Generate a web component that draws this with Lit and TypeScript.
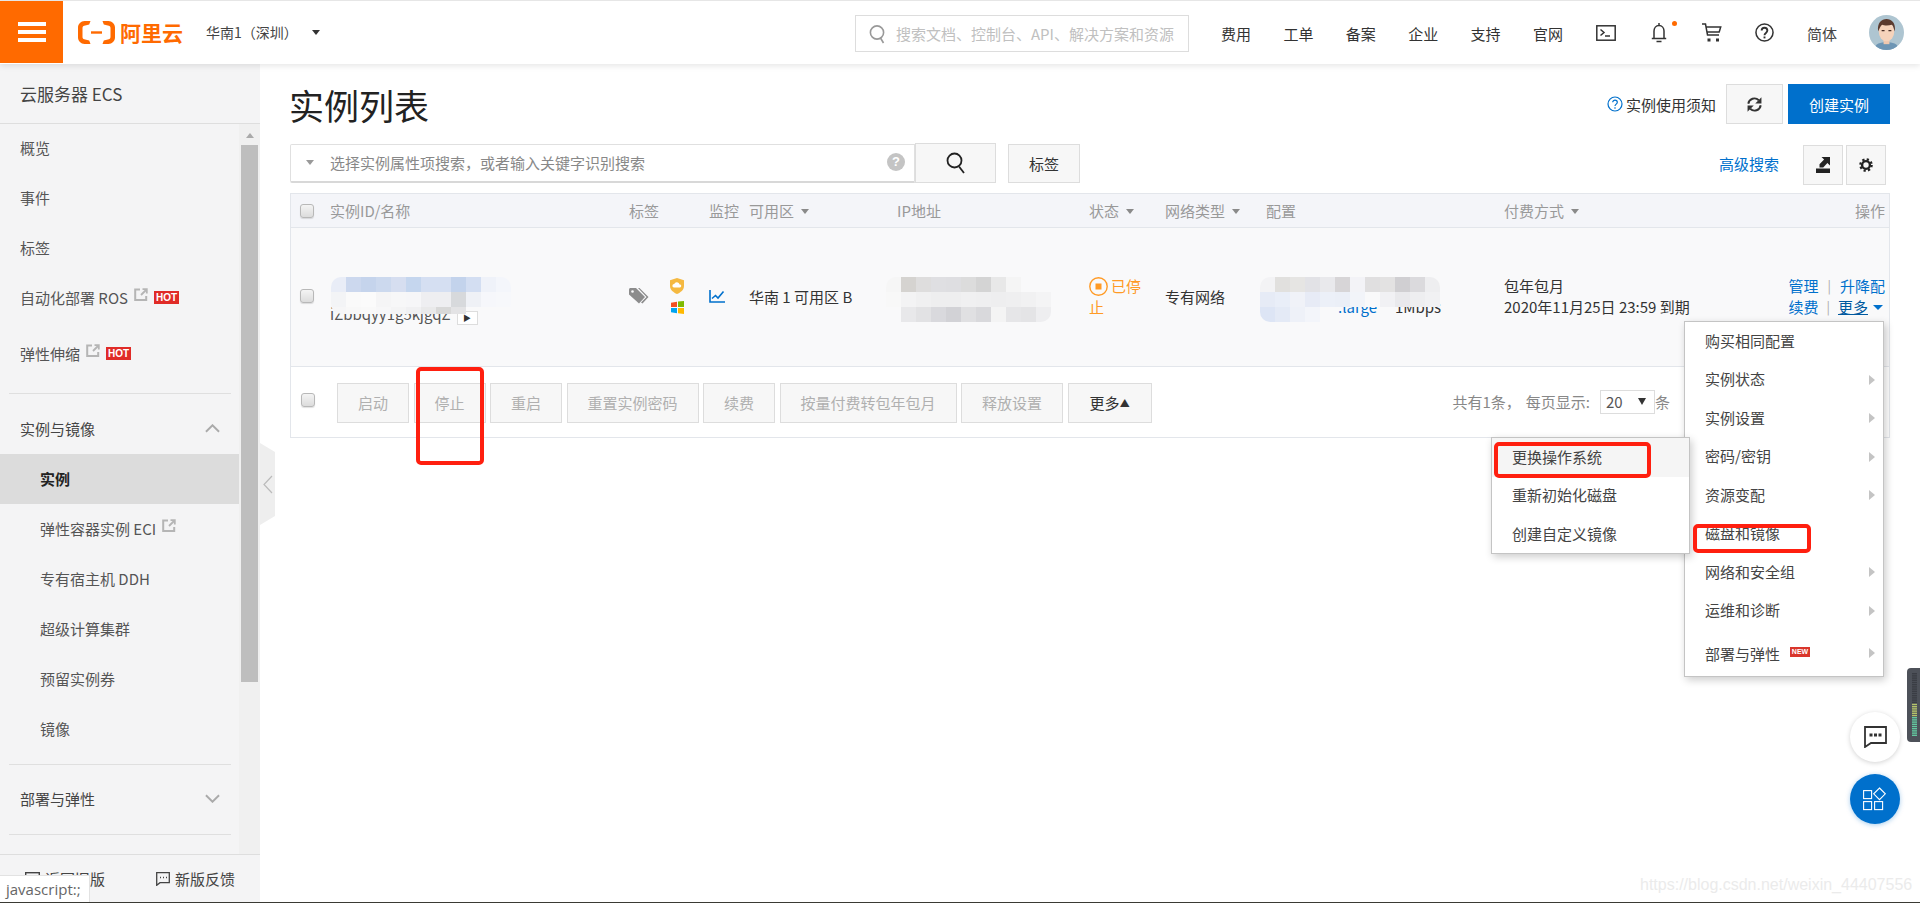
import { LitElement, html, css, svg } from "lit";
import { customElement } from "lit/decorators.js";

const extIcon = html`<svg class="ext" viewBox="0 0 14 13" width="14" height="13" fill="none" stroke="#b5b5b5" stroke-width="2"><path d="M6 1.500H1.200v10.500h11V8"/><path d="M7 7l5-5M8.500 1.200h4.300v4.300" stroke-width="1.800"/></svg>`;

const idBlob = [
  ["#e9edf7","#ccd8ee","#c5d4ec","#ccd9ee","#d6def0","#c5d6ee","#d5dff2","#d5dff2","#c3d3ec","#d3def2","#eff2f9","#f4f6fb"],
  ["#f3f4f6","#fafafa","#fbfbfb","#f5f5f6","#f7f7f8","#f6f6f8","#eeeef1","#eeeef1","#d7d9dc","#eff1f6","#f6f7fb","#f7f8fb"],
  ["#f6f6f7","#f8f8f8","#f9f9f9","#f7f7f8","#f4f4f5","#f0f0f2","#e9e9ea","#d8d8d8","#e3e3e5","transparent","transparent","transparent"],
];
const ipBlob = [
  ["#f6f6f6","#d5d3d0","#dedddd","#dfdfe2","#dedee1","#dcdcdc","#d4d4d4","#e8e8e8","#f5f5f5","#f9f9fa","transparent"],
  ["#f8f8f8","#f3f3f4","#f0f0f1","#eeeeef","#eeeeef","#f0f0f1","#efeff0","#eeeeef","#efeff0","#f1f1f2","#f4f4f5"],
  ["transparent","#e8e8ea","#e2e2e4","#d9d9dd","#d2d2d6","#e0e0e2","#d9d9dc","#f4f4f4","#e6e6e8","#e4e4e6","#eeeef0"],
];
const cfgBlob = [
  ["#f3f3f5","#e1e0de","#e6e5e3","#e2e2e6","#e9e9ec","#d7d5d7","#f3f3f7","#e0dfe0","#e3e2e2","#d0cfd2","#dbdadd","#eeeef0"],
  ["#e6ebf6","#e9eef8","#f0f2f8","#e7ebf6","#ecf0f8","#ebeff7","#f2f4f9","#f9f9fa","#f1f1f4","#e9e9ec","#eeeef0","#f1f1f3"],
  ["#dde5f5","#e4eaf6","#eef1f8","#f3f5fa","transparent","transparent","transparent","transparent","transparent","transparent","transparent","transparent"],
];

const mosaic = (cls: string, rows: string[][]) => html`<div class="blob ${cls}" style="grid-template-columns:repeat(${rows[0].length},15px)">
  ${rows.flat().map((c) => html`<i style="background:${c}"></i>`)}
</div>`;

@customElement("app-root")
export class AppRoot extends LitElement {
  static styles = css`
    :host { display: block; width: 1920px; height: 903px; position: relative; overflow: hidden; background: #fff;
      font-family: "Noto Sans CJK SC", "Liberation Sans", sans-serif; font-size: 15px; color: #333; line-height: 21px; }
    * { box-sizing: border-box; }
    .page { display: flex; flex-direction: column; height: 903px; }
    .top { height: 64px; flex: none; display: flex; align-items: center; background: #fff; border-top: 1px solid #e6e6e6;
      box-shadow: 0 2px 6px rgba(0,0,0,.1); position: relative; z-index: 3; }
    .burger { width: 63px; height: 62px; margin-bottom: 1px; background: #ff6a00; display: flex; flex-direction: column; justify-content: center; align-items: center; gap: 4px; }
    .burger i { display: block; width: 28px; height: 4px; background: #fff; }
    .logo { display: flex; align-items: center; margin-left: 15px; gap: 5px; color: #ff6a00; font-weight: 700; font-size: 21px; letter-spacing: 0; width: 105px; margin-bottom: 1px; white-space: nowrap; }
    .region { margin-left: 23px; width: 106px; color: #444; font-size: 14px; white-space: nowrap; }
    .drop { width: 0; height: 0; border: 4.5px solid transparent; border-top: 5px solid #333; border-bottom: 0; }
    .topsearch { margin-left: 535px; width: 334px; height: 37px; border: 1px solid #ddd; display: flex; align-items: center; padding-left: 13px; gap: 10px; color: #c0c0c0; white-space: nowrap; margin-top: 2px; }
    .nav { display: flex; margin-left: 32px; width: 375px; gap: 32.4px; white-space: nowrap; color: #333; margin-top: 2px; }
    .nav span { width: 30px; }
    .ico { display: block; flex: none; }
    .t2 { margin-left: 35px; } .t3 { margin-left: 35px; } .t4 { margin-left: 33px; }
    .bell { position: relative; }
    .bell b { position: absolute; left: 21px; top: -2px; width: 5px; height: 5px; border-radius: 50%; background: #ff6a00; }
    .lang { margin-left: 33px; margin-top: 2px; white-space: nowrap; color: #444; }
    .avatar { margin-left: 32px; }

    .body { flex: 1; display: flex; min-height: 0; }
    .side { width: 260px; flex: none; background: #f0f0f0; display: flex; flex-direction: column; }
    .side-title { height: 60px; flex: none; background: #f4f4f5; border-bottom: 1px solid #dedede; padding: 19px 0 0 20px; font-size: 17px; line-height: 22px; color: #444; }
    .side-mid { flex: 1; display: flex; min-height: 0; overflow: hidden; }
    .list { width: 239px; flex: none; background: #f4f4f5; padding-top: 0; }
    .bar { width: 17px; margin-left: 2px; display: flex; flex-direction: column; align-items: center; }
    .bar u { display: block; width: 0; height: 0; margin: 9px 0 7px; border: 4px solid transparent; border-bottom: 5px solid #aaa; border-top: 0; }
    .bar b { display: block; width: 17px; height: 537px; background: #bebebe; }
    .item { height: 50px; display: flex; align-items: center; padding: 0 0 2px 20px; color: #555; white-space: nowrap; }
    .list > .item:first-child { margin-top: -1px; }
    .item.sub { padding-left: 40px; }
    .item.gap { margin-top: 6px; }
    .item.on { background: #dcdcdc; color: #222; font-weight: 700; }
    .item.group { color: #444; justify-content: space-between; padding-right: 19px; }
    .ext { margin-left: 6px; margin-top: -6px; flex: none; }
    .hot { margin-left: 6px; width: 25px; height: 13px; background: #e02b27; color: #fff; font: 700 10px/13px "Liberation Sans", sans-serif; text-align: center; flex: none; }
    .div { height: 1px; background: #dfdfdf; margin: 14px 8px 10px 9px; }
    .div.b { margin: 10px 8px 9px 9px; }
    .div.c { margin: 10px 8px 0 9px; }
    .side-foot { height: 48px; flex: none; background: #f4f4f5; border-top: 1px solid #dedede; display: flex; align-items: center; padding-left: 25px; color: #444; white-space: nowrap; }
    .side-foot svg { margin-right: 5px; }
    .side-foot .fb { margin-left: 51px; }

    .main { flex: 1; padding: 20px 30px 0; min-width: 0; }
    .head { display: flex; align-items: center; height: 40px; }
    h1 { margin: 1px 0 0 -1px; font-size: 35px; font-weight: 400; line-height: 44px; color: #222; }
    .notice { margin-left: auto; display: flex; align-items: center; gap: 3px; white-space: nowrap; margin-right: 10px; color: #333; }
    .btn { height: 40px; border: 1px solid #ddd; background: #f7f7f7; display: flex; align-items: center; justify-content: center; white-space: nowrap; flex: none; }
    .refresh { width: 57px; }
    .create { width: 102px; margin-left: 5px; background: #0070cc; border: 0; color: #fff; }
    .filters { display: flex; margin-top: 20px; height: 41px; }
    .input { width: 625px; height: 39px; border: 1px solid #e0e0e0; border-bottom: 2px solid #d8d8d8; border-radius: 2px 0 0 2px; background: #fff; display: flex; align-items: center; padding: 0 0 2px 15px; color: #888; white-space: nowrap; }
    .input .c { width: 0; height: 0; border: 4.5px solid transparent; border-top: 5px solid #999; border-bottom: 0; margin-right: 16px; }
    .input .q { margin-left: auto; margin-right: 9px; width: 18px; height: 18px; border-radius: 50%; background: #c4c4c4; color: #fff; font: 700 13px/18px "Liberation Sans", sans-serif; text-align: center; }
    .sbtn { width: 81px; margin-top: -1px; }
    .tbtn { width: 72px; height: 39px; margin-left: 12px; }
    .adv { margin-left: auto; color: #0070cc; margin-right: 24px; align-self: center; white-space: nowrap; margin-bottom: 2px; }
    .sq { width: 40px; margin-top: 1px; }
    .sq + .sq { margin-left: 3px; margin-right: 4px; }

    .table { margin-top: 8px; border: 1px solid #e3e6eb; width: 1600px; }
    .grid { display: grid; grid-template-columns: 30px 299px 80px 40px 148px 192px 76px 101px 238px 238px 1fr; padding: 0 4px 0 9px; align-items: center; white-space: nowrap; }
    .thead { height: 34px; background: #f4f5f9; border-bottom: 1px solid #e3e6eb; color: #999; }
    .thead .r, .acts { justify-self: end; }
    .thead > div { display: flex; align-items: center; gap: 7px; }
    .cb { display: block; width: 14px; height: 14px; border: 1px solid #b8b8b8; border-radius: 3px; background: linear-gradient(#f4f4f4, #dcdcdc); box-shadow: 0 1px 1px rgba(0,0,0,.12); }
    .car { display: inline-block; width: 0; height: 0; border: 4.5px solid transparent; border-top: 5px solid #8a8a8a; border-bottom: 0; margin-top: 1px; }
    .row { height: 139px; padding-bottom: 2px; background: #f9f9fa; border-bottom: 1px solid #e3e6eb; position: relative; color: #333; }
    .blob { position: absolute; top: 49px; display: grid; grid-auto-rows: 15px; border-radius: 10px; overflow: hidden; }
    .blob i { display: block; }
    .blob.a { left: 40px; height: 37px; }
    .blob.b { left: 595px; }
    .blob.c { left: 969px; }
    .idc { padding-top: 35px; color: #555; }
    .copy { display: inline-block; width: 21px; height: 14px; margin-left: 6px; vertical-align: -1px; border: 1px solid #ddd; background: #fff; font-size: 8px; line-height: 12px; text-align: center; color: #333; }
    .marks { display: flex; align-items: center; gap: 21px; }
    .marks div { display: flex; flex-direction: column; gap: 7px; align-items: center; }
    .status { width: 56px; white-space: normal; color: #ff9a24; }
    .status svg { vertical-align: -4px; margin-right: 3px; }
    .cfg { color: #333; padding-top: 21px; padding-left: 72px; display: flex; }
    .cfg a { color: #0070cc; display: block; width: 57px; }
    .acts { color: #0070cc; }
    .acts div { display: flex; justify-content: flex-end; align-items: center; gap: 9px; }
    .acts s { text-decoration: none; color: #aaa; font-size: 13px; }
    .acts u { color: #00599f; }
    .acts .l2 { gap: 8px; margin-right: 2px; }
    .acts .car { border-top-color: #0070cc; border-width: 5px; border-bottom: 0; margin-left: -3px; }
    .tools { height: 70px; display: flex; align-items: center; padding-left: 10px; background: #fff; position: relative; }
    .tools .cb { margin-right: 22px; margin-bottom: 5px; }
    .btns { display: flex; gap: 4.5px; margin-top: 1px; }
    .btns .btn { padding: 0 20px; color: #b0b0b0; }
    .btns .more { color: #333; padding: 0 21px; font-size: 15px; }
    .more em { font-style: normal; font-size: 10px; }
    .pager { margin-left: auto; margin-right: 219px; display: flex; align-items: center; color: #888; white-space: nowrap; margin-bottom: 1px; }
    .pager span.gap { margin-left: 5px; }
    .sel { width: 55px; height: 24px; border: 1px solid #ddd; margin-left: 10px; display: flex; align-items: center; padding: 0 8px 0 5px; justify-content: space-between; color: #555; }
    .sel i { width: 0; height: 0; border: 4px solid transparent; border-top: 7px solid #333; border-bottom: 0; }

    .foot-line { height: 1px; flex: none; background: #3a3a34; }

    .menu { position: absolute; background: #fff; border: 1px solid #c4c4c4; box-shadow: 2px 3px 8px rgba(0,0,0,.2); z-index: 4; color: #444; white-space: nowrap; }
    .m1 { left: 1684px; top: 321px; width: 200px; height: 356px; }
    .m2 { left: 1491px; top: 437px; width: 199px; height: 117px; z-index: 5; }
    .mi { height: 38.5px; padding: 0 0 2px 20px; display: flex; align-items: center; position: relative; }
    .mi.hl { background: #f5f5f5; }
    .mi .ar { position: absolute; left: 184px; top: 14px; width: 0; height: 0; border: 5.5px solid transparent; border-left: 6px solid #c4c4c4; border-right: 0; }
    .mi.last { margin-top: 4px; height: 39px; padding-bottom: 0; }
    .new { margin-left: 10px; width: 20px; height: 10px; background: #d9362c; color: #fff; font: 700 7px/10px "Liberation Sans", sans-serif; text-align: center; margin-top: -4px; }
    .rb { position: absolute; border: 4px solid #ff1f0f; border-radius: 5px; z-index: 6; }
    .rb1 { left: 416px; top: 367px; width: 68px; height: 98px; }
    .rb2 { left: 1494px; top: 442px; width: 157px; height: 36px; }
    .rb3 { left: 1693px; top: 524px; width: 118px; height: 29px; }
    .collapse { position: absolute; left: 260px; top: 443px; width: 15px; height: 82px; background: #eee; clip-path: polygon(0 0, 100% 11%, 100% 89%, 0 100%); z-index: 2; display: flex; align-items: center; justify-content: center; }
    .fab { position: absolute; left: 1850px; width: 50px; height: 50px; border-radius: 50%; display: flex; align-items: center; justify-content: center; z-index: 4; }
    .fab.w { top: 712px; background: #fff; box-shadow: 0 1px 5px rgba(0,0,0,.18); }
    .fab.bl { top: 774px; background: #0070cc; box-shadow: 0 1px 5px rgba(0,112,204,.35); }
    .meter { position: absolute; left: 1907px; top: 668px; width: 13px; height: 74px; background: #4d5159; border-radius: 4px 0 0 4px; z-index: 4; }
    .tip { position: absolute; left: 0; top: 875px; width: 90px; height: 27px; background: #fff; border-top: 1px solid #e2e2e2; border-right: 1px solid #e2e2e2; color: #666; font: 15px/26px "Open Sans", sans-serif; padding-left: 6px; z-index: 6; white-space: nowrap; }
    .mark { position: absolute; left: 1640px; top: 874px; font: 16px/22px "Liberation Sans", sans-serif; color: #ebebeb; white-space: nowrap; z-index: 6; }
  `;

  render() {
    const meter = Array.from({ length: 29 }, (_, i) => {
      const fill = i < 14 ? "#3a3d44" : i < 20 ? "#b5c46a" : "#63c9a0";
      return svg`<rect x="5" y="${5 + i * 2.2}" width="5" height="1.4" fill="${fill}"/>`;
    });
    return html`
      <div class="page">
        <header class="top">
          <div class="burger"><i></i><i></i><i></i></div>
          <div class="logo">
            <svg class="ico" viewBox="0 0 37 23" width="37" height="23" fill="#ff6a00"><path d="M12.500 0H6.500C3 0 0 3 0 6.500v10C0 20 3 23 6.500 23h6l-1.300-3.600-5-1.200c-1-.3-1.700-1.100-1.700-2.200V7c0-1.100.7-1.900 1.700-2.200l5-1.200z"/><path d="M24.500 0h6C34 0 37 3 37 6.500v10c0 3.500-3 6.500-6.500 6.500h-6l1.300-3.600 5-1.200c1-.3 1.700-1.100 1.700-2.200V7c0-1.100-.7-1.900-1.700-2.200l-5-1.200z"/><rect x="13" y="10.300" width="11" height="2.400"/></svg>
            <span>阿里云</span>
          </div>
          <div class="region">华南1（深圳）</div>
          <div class="drop"></div>
          <div class="topsearch">
            <svg class="ico" viewBox="0 0 17 20" width="17" height="20" fill="none" stroke="#999" stroke-width="1.600"><circle cx="8" cy="8.500" r="6.600"/><path d="M11.500 14l3 5"/></svg>
            <span>搜索文档、控制台、API、解决方案和资源</span>
          </div>
          <div class="nav"><span>费用</span><span>工单</span><span>备案</span><span>企业</span><span>支持</span><span>官网</span></div>
          <svg class="ico" viewBox="0 0 20 16" width="20" height="16" fill="none" stroke="#333" stroke-width="1.500"><rect x=".8" y=".8" width="18.400" height="14.400"/><path d="M4.500 4.500l3.500 3-3.500 3M9 11h5"/></svg>
          <div class="bell t2">
            <svg class="ico" viewBox="0 0 16 20" width="16" height="20" fill="none" stroke="#333" stroke-width="1.500"><path d="M3 15V8c0-3 2-5.500 5-5.500S13 5 13 8v7M.8 15.500h14.400M5.500 18.500h5M8 0v2"/></svg>
            <b></b>
          </div>
          <svg class="ico t3" viewBox="0 0 20 19" width="20" height="19" fill="none" stroke="#333" stroke-width="1.500"><path d="M0 1h3.500l2 11h11.500M4.200 4h14.500l-1.500 5H5.200"/><rect x="5.500" y="15.500" width="3" height="3" fill="#333" stroke="none"/><rect x="14" y="15.500" width="3" height="3" fill="#333" stroke="none"/></svg>
          <svg class="ico t4" viewBox="0 0 20 20" width="19" height="19" fill="none" stroke="#333" stroke-width="1.600"><circle cx="10" cy="10" r="9"/><path d="M7 8c0-4 6-4 6 0 0 2.500-3 2.500-3 5" stroke-width="2"/><rect x="9" y="14.200" width="2" height="2" fill="#333" stroke="none"/></svg>
          <div class="lang">简体</div>
          <svg class="ico avatar" viewBox="0 0 36 36" width="35" height="35"><defs><clipPath id="av"><circle cx="18" cy="18" r="18"/></clipPath></defs><g clip-path="url(#av)"><rect width="36" height="36" fill="#aec5d1"/><path d="M5 36c1-7 7-8 13-8s12 1 13 8z" fill="#6d95b4"/><rect x="15" y="22" width="6" height="8" fill="#f0c8ae"/><ellipse cx="18" cy="17" rx="8" ry="10" fill="#f6d3bb"/><path d="M9.500 17C8 8 13 4 18 4s10 4 8.500 13c-1-3-1.500-6-3-7-3 1-8 1-10 0-1.500 1-3 4-4 7z" fill="#5b3a2e"/><path d="M13 16h3M20 16h3" stroke="#4a2f25" stroke-width="1.200"/></g></svg>
        </header>

        <div class="body">
          <aside class="side">
            <div class="side-title">云服务器 ECS</div>
            <div class="side-mid">
              <nav class="list">
                <div class="item">概览</div>
                <div class="item">事件</div>
                <div class="item">标签</div>
                <div class="item">自动化部署 ROS ${extIcon}<span class="hot">HOT</span></div>
                <div class="item gap">弹性伸缩 ${extIcon}<span class="hot">HOT</span></div>
                <div class="div"></div>
                <div class="item group">实例与镜像
                  <svg viewBox="0 0 16 9" width="15" height="9" fill="none" stroke="#aaa" stroke-width="2"><path d="M1 8l7-7 7 7"/></svg>
                </div>
                <div class="item sub on">实例</div>
                <div class="item sub">弹性容器实例 ECI ${extIcon}</div>
                <div class="item sub">专有宿主机 DDH</div>
                <div class="item sub">超级计算集群</div>
                <div class="item sub">预留实例券</div>
                <div class="item sub">镜像</div>
                <div class="div b"></div>
                <div class="item group">部署与弹性
                  <svg viewBox="0 0 16 9" width="15" height="9" fill="none" stroke="#aaa" stroke-width="2"><path d="M1 1l7 7 7-7"/></svg>
                </div>
                <div class="div c"></div>
              </nav>
              <div class="bar"><u></u><b></b></div>
            </div>
            <div class="side-foot">
              <svg viewBox="0 0 15 14" width="15" height="14" fill="none" stroke="#444" stroke-width="1.400"><rect x=".7" y=".7" width="13.600" height="12.600"/></svg>
              <span>返回旧版</span>
              <svg class="fb" viewBox="0 0 14 14" width="14" height="14" fill="none" stroke="#444" stroke-width="1.300"><path d="M.7.7h12.600v10H4L.7 13.300z"/><path d="M4 5.500h1M7 5.500h1M10 5.500h1"/></svg>
              <span>新版反馈</span>
            </div>
          </aside>

          <main class="main">
            <div class="head">
              <h1>实例列表</h1>
              <div class="notice">
                <svg class="ico" viewBox="0 0 16 16" width="16" height="16" fill="none" stroke="#0070cc" stroke-width="1.200"><circle cx="8" cy="8" r="7"/><path d="M5.700 6.300c0-3 4.600-3 4.600 0 0 1.800-2.300 1.800-2.300 3.700M8 11.200v1.500"/></svg>
                <span>实例使用须知</span>
              </div>
              <div class="btn refresh">
                <svg viewBox="0 0 14 14" width="15" height="15" fill="none" stroke="#333" stroke-width="1.800"><path d="M1.200 6.300A5.800 5.800 0 0 1 11 3"/><path d="M13.500.3v5.800H7.700z" fill="#333" stroke="none"/><path d="M12.800 7.700A5.800 5.800 0 0 1 3 11"/><path d="M.5 13.700V7.900h5.800z" fill="#333" stroke="none"/></svg>
              </div>
              <div class="btn create">创建实例</div>
            </div>

            <div class="filters">
              <div class="input"><i class="c"></i>选择实例属性项搜索，或者输入关键字识别搜索<span class="q">?</span></div>
              <div class="btn sbtn">
                <svg viewBox="0 0 20 22" width="20" height="22" fill="none" stroke="#222" stroke-width="1.800"><circle cx="8.500" cy="8.500" r="7"/><path d="M13 14.500l5 6.500"/></svg>
              </div>
              <div class="btn tbtn">标签</div>
              <div class="adv">高级搜索</div>
              <div class="btn sq">
                <svg viewBox="0 0 14 16" width="14" height="16" fill="#222"><path d="M5.500 0H14v8.500l-2.600-2.600L7.200 10.500H3.500V7.300L8.100 2.600z"/><rect x="0" y="11.500" width="14" height="4.500"/></svg>
              </div>
              <div class="btn sq">
                <svg viewBox="0 0 14 14" width="14" height="14" fill="none" stroke="#222"><circle cx="7" cy="7" r="3.900" stroke-width="2.400"/><circle cx="7" cy="7" r="5.700" stroke-width="2.200" stroke-dasharray="2.240 2.240"/></svg>
              </div>
            </div>

            <section class="table">
              <div class="grid thead">
                <div><i class="cb"></i></div>
                <div>实例ID/名称</div>
                <div>标签</div>
                <div>监控</div>
                <div>可用区<i class="car"></i></div>
                <div>IP地址</div>
                <div>状态<i class="car"></i></div>
                <div>网络类型<i class="car"></i></div>
                <div>配置</div>
                <div>付费方式<i class="car"></i></div>
                <div class="r">操作</div>
              </div>
              <div class="grid row">
                <div><i class="cb"></i></div>
                <div class="idc">iZbbqyy1g5kjgqZ<span class="copy">▶</span></div>
                <div class="marks">
                  <svg viewBox="0 0 20 16" width="20" height="16" fill="#8c8c8c"><path d="M0 1.500C0 .7.700 0 1.500 0H7l9 9-6 6.500-10-9z"/><path d="M9 0h1.500l9 9-6 6.500-1.500-1 5.500-5.500z"/><circle cx="3.500" cy="3.500" r="1.300" fill="#f9f9fa"/></svg>
                  <div>
                    <svg viewBox="0 0 14 16" width="14" height="16"><path d="M7 0l7 2.200V8c0 4-3.500 6.500-7 8-3.500-1.500-7-4-7-8V2.200z" fill="#f5b941"/><path d="M4 9.500a1.700 1.700 0 0 1 .2-3.400 2.800 2.800 0 0 1 5.400.4 1.500 1.500 0 0 1 .3 3z" fill="#fff"/></svg>
                    <svg viewBox="0 0 13 13" width="13" height="13"><path d="M0 1.800L6 .8v5.200H0z" fill="#f25022"/><path d="M7 .6L13 0v6H7z" fill="#7fba00"/><path d="M0 7h6v5.200L0 11.200z" fill="#00a4ef"/><path d="M7 7h6v6l-6-.8z" fill="#ffb900"/></svg>
                  </div>
                </div>
                <div>
                  <svg class="ico" viewBox="0 0 16 13" width="16" height="13" fill="none" stroke="#0070cc" stroke-width="1.600"><path d="M1 0v12h15"/><path d="M3 8.500l3.500-3 2.500 2.500 5.500-6.500"/></svg>
                </div>
                <div>华南 1 可用区 B</div>
                <div></div>
                <div class="status"><svg viewBox="0 0 19 19" width="19" height="19"><circle cx="9.500" cy="9.500" r="8.700" fill="none" stroke="#ff9a24" stroke-width="1.400"/><rect x="6.500" y="6.500" width="6" height="6" fill="#ff9a24"/></svg>已停止</div>
                <div>专有网络</div>
                <div class="cfg"><a>.large</a><span>1Mbps</span></div>
                <div><div>包年包月</div><div>2020年11月25日 23:59 到期</div></div>
                <div class="acts">
                  <div><span>管理</span><s>|</s><span>升降配</span></div>
                  <div class="l2"><span>续费</span><s>|</s><u>更多</u><i class="car"></i></div>
                </div>
                ${mosaic("a", idBlob)}${mosaic("b", ipBlob)}${mosaic("c", cfgBlob)}
              </div>
              <div class="tools">
                <i class="cb"></i>
                <div class="btns">
                  <div class="btn">启动</div>
                  <div class="btn">停止</div>
                  <div class="btn">重启</div>
                  <div class="btn">重置实例密码</div>
                  <div class="btn">续费</div>
                  <div class="btn">按量付费转包年包月</div>
                  <div class="btn">释放设置</div>
                  <div class="btn more">更多<em>▲</em></div>
                </div>
                <div class="pager"><span>共有1条，</span><span class="gap">每页显示:</span><div class="sel"><span>20</span><i></i></div>条</div>
              </div>
            </section>
          </main>
        </div>
        <div class="foot-line"></div>
      </div>

      <div class="collapse"><svg viewBox="0 0 11 19" width="11" height="19" fill="none" stroke="#bbb" stroke-width="1.200"><path d="M10 1L2 9.500 10 18"/></svg></div>

      <div class="menu m1">
        <div class="mi">购买相同配置</div>
        <div class="mi">实例状态<i class="ar"></i></div>
        <div class="mi">实例设置<i class="ar"></i></div>
        <div class="mi">密码/密钥<i class="ar"></i></div>
        <div class="mi">资源变配<i class="ar"></i></div>
        <div class="mi">磁盘和镜像</div>
        <div class="mi">网络和安全组<i class="ar"></i></div>
        <div class="mi">运维和诊断<i class="ar"></i></div>
        <div class="mi last">部署与弹性<span class="new">NEW</span><i class="ar"></i></div>
      </div>
      <div class="menu m2">
        <div class="mi hl">更换操作系统</div>
        <div class="mi">重新初始化磁盘</div>
        <div class="mi">创建自定义镜像</div>
      </div>
      <div class="rb rb1"></div>
      <div class="rb rb2"></div>
      <div class="rb rb3"></div>

      <div class="meter"><svg width="13" height="74" viewBox="0 0 13 74">${meter}</svg></div>
      <div class="fab w">
        <svg viewBox="0 0 23 22" width="23" height="22" fill="none" stroke="#333" stroke-width="1.800"><path d="M1 1h21v16H7l-6 4z"/><rect x="5.500" y="7.500" width="3" height="3" fill="#333" stroke="none"/><rect x="10" y="7.500" width="3" height="3" fill="#333" stroke="none"/><rect x="14.500" y="7.500" width="3" height="3" fill="#333" stroke="none"/></svg>
      </div>
      <div class="fab bl">
        <svg viewBox="0 0 24 24" width="24" height="24" fill="none" stroke="#fff" stroke-width="1.100"><rect x=".6" y="3.600" width="8" height="8"/><rect x=".6" y="14.600" width="8" height="8"/><rect x="11.600" y="14.600" width="8" height="8"/><path d="M16.500 1l5.800 5.800-5.800 5.800-5.800-5.800z"/></svg>
      </div>
      <div class="tip">javascript:;</div>
      <div class="mark">https://blog.csdn.net/weixin_44407556</div>
    `;
  }
}
